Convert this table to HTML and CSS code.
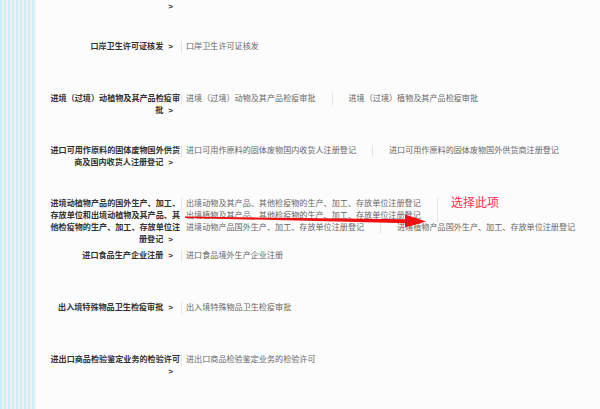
FILE: index.html
```html
<!DOCTYPE html>
<html lang="zh-CN">
<head>
<meta charset="utf-8">
<title>行政审批事项</title>
<link rel="stylesheet" href="styles.css">
</head>
<body>
<div class="page">
  <div class="stripes"></div>
  <main class="list">
    <div class="row tail">
      <div class="label"><span class="go">&gt;</span></div>
    </div>
    <div class="row">
      <div class="label">口岸卫生许可证核发<span class="go">&gt;</span></div>
      <i class="bar"></i>
      <div class="items"><span class="item">口岸卫生许可证核发</span></div>
    </div>
    <div class="row">
      <div class="label">进境（过境）动植物及其产品检疫审批<span class="go">&gt;</span></div>
      <i class="bar"></i>
      <div class="items"><span class="item">进境（过境）动物及其产品检疫审批</span><span class="item">进境（过境）植物及其产品检疫审批</span></div>
    </div>
    <div class="row">
      <div class="label">进口可用作原料的固体废物国外供货商及国内收货人注册登记<span class="go">&gt;</span></div>
      <i class="bar"></i>
      <div class="items"><span class="item">进口可用作原料的固体废物国内收货人注册登记</span><span class="item">进口可用作原料的固体废物国外供货商注册登记</span></div>
    </div>
    <div class="row">
      <div class="label">进境动植物产品的国外生产、加工、存放单位和出境动植物及其产品、其他检疫物的生产、加工、存放单位注册登记<span class="go">&gt;</span></div>
      <i class="bar"></i>
      <div class="items"><span class="item">出境动物及其产品、其他检疫物的生产、加工、存放单位注册登记</span><span class="item">出境植物及其产品、其他检疫物的生产、加工、存放单位注册登记</span><span class="item">进境动物产品国外生产、加工、存放单位注册登记</span><span class="item">进境植物产品国外生产、加工、存放单位注册登记</span></div>
    </div>
    <div class="row">
      <div class="label">进口食品生产企业注册<span class="go">&gt;</span></div>
      <i class="bar"></i>
      <div class="items"><span class="item">进口食品境外生产企业注册</span></div>
    </div>
    <div class="row">
      <div class="label">出入境特殊物品卫生检疫审批<span class="go">&gt;</span></div>
      <i class="bar"></i>
      <div class="items"><span class="item">出入境特殊物品卫生检疫审批</span></div>
    </div>
    <div class="row">
      <div class="label">进出口商品检验鉴定业务的检验许可<span class="go">&gt;</span></div>
      <i class="bar"></i>
      <div class="items"><span class="item">进出口商品检验鉴定业务的检验许可</span></div>
    </div>
  </main>
  <svg class="arrow" width="600" height="409" viewBox="0 0 600 409" aria-hidden="true">
    <polygon points="185,216.6 408,219.3 408,223.2 185,218" fill="#ee1111"/>
    <polygon points="405,214.5 426,221.4 405,227.5" fill="#ee1111"/>
  </svg>
  <span class="note">选择此项</span>
</div>
</body>
</html>
```

FILE: styles.css
```css
html, body {
  margin: 0;
  padding: 0;
}

body {
  background: #fcfcfc;
  font-family: "Liberation Sans", "Noto Sans CJK SC", sans-serif;
  font-size: 8.1px;
  line-height: 12px;
}

.page {
  position: relative;
  display: flex;
  width: 600px;
  height: 409px;
  overflow: hidden;
}

.stripes {
  flex: none;
  width: 36px;
  background: repeating-linear-gradient(90deg, #c6f3f7 0 2px, #fbeaef 2px 4px);
}

.list {
  flex: 1;
  padding-left: 14px;
}

.row {
  display: flex;
  align-items: flex-start;
  height: 52.2px;
}

.row.tail {
  height: 41px;
  padding-top: 1px;
  box-sizing: border-box;
}

.label {
  flex: none;
  width: 130px;
  text-align: right;
  font-weight: bold;
  color: #333;
}

.go {
  margin-left: 5px;
  margin-right: 7px;
}

.bar {
  flex: none;
  width: 1px;
  height: 12px;
  margin: 0 4px 0 1px;
  background: #e4e4e4;
}

.items {
  flex: 1;
  display: flex;
  flex-wrap: wrap;
  color: #666;
}

.item {
  flex: none;
  white-space: nowrap;
}

.item:not(:last-child)::after {
  content: "";
  display: inline-block;
  vertical-align: top;
  width: 1px;
  height: 12px;
  margin: 0 16px;
  background: #e4e4e4;
}

.arrow {
  position: absolute;
  left: 0;
  top: 0;
  pointer-events: none;
}

.note {
  position: absolute;
  left: 451px;
  top: 197px;
  font-size: 12px;
  line-height: 12px;
  color: #ff2f55;
}
```
